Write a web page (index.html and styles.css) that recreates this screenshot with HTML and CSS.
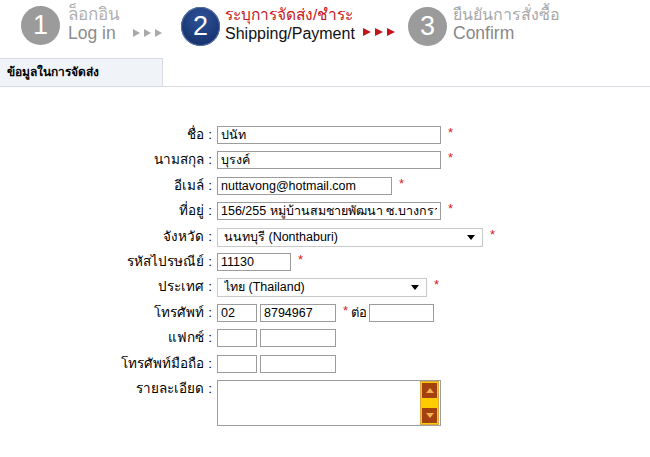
FILE: index.html
```html
<!DOCTYPE html>
<html lang="th">
<head>
<meta charset="utf-8">
<title>Shipping/Payment</title>
<link rel="stylesheet" href="styles.css">
</head>
<body>
<div class="steps">
  <div class="step step-done">
    <div class="circle">1</div>
    <div class="step-text s1"><div class="th">ล็อกอิน</div><div class="en">Log in</div></div>
    <svg class="arrows" width="29" height="8" viewBox="0 0 29 8"><polygon points="0,0 7,4 0,8" /><polygon points="11,0 18,4 11,8"/><polygon points="22,0 29,4 22,8"/></svg>
  </div>
  <div class="step step-cur">
    <div class="circle">2</div>
    <div class="step-text s2"><div class="th">ระบุการจัดส่ง/ชำระ</div><div class="en">Shipping/Payment</div></div>
    <svg class="arrows" width="33" height="8" viewBox="0 0 33 8"><polygon points="0,0 8,4 0,8"/><polygon points="12,0 20,4 12,8"/><polygon points="24,0 32,4 24,8"/></svg>
  </div>
  <div class="step step-next">
    <div class="circle">3</div>
    <div class="step-text s3"><div class="th">ยืนยันการสั่งซื้อ</div><div class="en">Confirm</div></div>
  </div>
</div>

<div class="tabbar">
  <div class="tab">ข้อมูลในการจัดส่ง</div>
</div>

<form class="form">
  <div class="row"><label class="lbl">ชื่อ :</label><div class="fields"><input class="in w224" value="ปนัท"><span class="req">*</span></div></div>
  <div class="row"><label class="lbl">นามสกุล :</label><div class="fields"><input class="in w224" value="บุรงค์"><span class="req">*</span></div></div>
  <div class="row"><label class="lbl">อีเมล์ :</label><div class="fields"><input class="in w175" value="nuttavong@hotmail.com"><span class="req">*</span></div></div>
  <div class="row"><label class="lbl">ที่อยู่ :</label><div class="fields"><input class="in w224" value="156/255 หมู่บ้านสมชายพัฒนา ซ.บางกรวยไทรน้อย"><span class="req">*</span></div></div>
  <div class="row"><label class="lbl">จังหวัด :</label><div class="fields"><div class="sel w266"><span class="sel-val">นนทบุรี (Nonthaburi)</span><span class="caret"></span></div><span class="req">*</span></div></div>
  <div class="row"><label class="lbl">รหัสไปรษณีย์ :</label><div class="fields"><input class="in w74" value="11130"><span class="req">*</span></div></div>
  <div class="row"><label class="lbl">ประเทศ :</label><div class="fields"><div class="sel w210"><span class="sel-val">ไทย (Thailand)</span><span class="caret"></span></div><span class="req">*</span></div></div>
  <div class="row"><label class="lbl">โทรศัพท์ :</label><div class="fields"><input class="in w40" value="02"><input class="in w76 ml3" value="8794967"><span class="req">*</span><span class="ext">ต่อ</span><input class="in w65"></div></div>
  <div class="row"><label class="lbl">แฟกซ์ :</label><div class="fields"><input class="in w40"><input class="in w76 ml3"></div></div>
  <div class="row"><label class="lbl">โทรศัพท์มือถือ :</label><div class="fields"><input class="in w40"><input class="in w76 ml3"></div></div>
  <div class="row row-tall"><label class="lbl">รายละเอียด :</label><div class="fields">
    <div class="ta">
      <div class="ta-body"></div>
      <div class="sb">
        <div class="sb-btn"><svg width="8" height="5" viewBox="0 0 8 5"><polygon points="4,0 8,5 0,5"/></svg></div>
        <div class="sb-btn"><svg width="8" height="5" viewBox="0 0 8 5"><polygon points="0,0 8,0 4,5"/></svg></div>
      </div>
    </div>
  </div></div>
</form>
</body>
</html>
```
FILE: styles.css
```css
* { box-sizing: border-box; }
body {
  margin: 0;
  background: #fff;
  font-family: "Liberation Sans", "DejaVu Sans", sans-serif;
  color: #000;
  width: 650px;
  height: 457px;
  overflow: hidden;
}

/* steps */
.steps {
  height: 58px;
  display: flex;
  align-items: flex-start;
  padding-left: 21px;
  padding-top: 6px;
}
.step { display: flex; align-items: flex-start; }
.circle {
  width: 39px;
  height: 39px;
  border-radius: 50%;
  background: #9b9b9b;
  color: #fff;
  font-size: 27px;
  line-height: 39px;
  text-align: center;
  flex: none;
}
.step-cur .circle {
  margin-top: 1px;
  background: radial-gradient(circle at 50% 30%, #2e5298 0%, #1c3a78 60%, #142c60 100%);
  box-shadow: 0 0 0 1px #5670a4 inset;
}
.step-text {
  margin-left: 8px;
  font-size: 17px;
  line-height: 19px;
  margin-top: -1px;
  white-space: nowrap;
}
.step-text .th { color: #b0b0b0; }
.step-text .en { color: #8c8c8c; font-size: 17.5px; }
.s1 { width: 65px; }
.s2 { width: 138px; margin-left: 5px; }
.s2 .th { font-size: 15.5px; }
.s2 .en { font-size: 16px; }
.s3 { margin-left: 6px; }
.s3 .th { font-size: 16px; }
.step-cur .th { color: #c8161d; }
.step-cur .en { color: #111; }
.step-next .th { color: #a8a8a8; }
.step-next .en { color: #888; }
.arrows { margin-top: 23px; flex: none; }
.step-done .arrows { fill: #a9a9a9; margin-right: 19px; }
.step-cur .arrows { fill: #c0161b; margin-top: 22px; margin-right: 12px; }
.step-next .circle { margin-top: 1px; }

/* tab */
.tabbar {
  border-bottom: 1px solid #d7dce2;
  height: 29px;
}
.tab {
  width: 163px;
  height: 28px;
  background: #f0f4f9;
  border-top: 1px solid #d7dce2;
  border-right: 1px solid #d7dce2;
  font-size: 12px;
  font-weight: bold;
  line-height: 27px;
  padding-left: 7px;
}

/* form */
.form {
  padding-top: 39px;
  font-size: 13.5px;
  font-family: "Liberation Sans", "DejaVu Sans", sans-serif;
}
.row {
  display: flex;
  align-items: flex-start;
  height: 18px;
  margin-bottom: 7.4px;
}
.row-tall { height: 46px; }
.lbl {
  width: 213px;
  padding-right: 1px;
  text-align: right;
  line-height: 18px;
  white-space: nowrap;
}
.fields {
  margin-left: 4px;
  display: flex;
  align-items: flex-start;
}
.in {
  height: 18px;
  border: 1px solid #9c9c9c;
  padding: 0 3px;
  font: 12.5px "Liberation Sans", "DejaVu Sans", sans-serif;
  color: #000;
  background: #fff;
  outline: none;
  margin: 0;
}
.w224 { width: 224px; }
.w175 { width: 175px; }
.w74 { width: 74px; }
.w40 { width: 40px; }
.w76 { width: 76px; }
.w65 { width: 65px; }
.w266 { width: 266px; }
.w210 { width: 210px; }
.ml3 { margin-left: 3px; }
.req {
  color: #d42020;
  margin-left: 7px;
  font-size: 13px;
  line-height: 14px;
}
.ext {
  margin-left: 3px;
  margin-right: 2px;
  line-height: 18px;
  font-size: 13px;
}
.sel {
  height: 19px;
  border: 1px solid #c9c9c9;
  display: flex;
  align-items: center;
  padding-left: 6px;
  padding-right: 7px;
  background: #fff;
  font-size: 12.5px;
}
.sel-val { flex: 1; line-height: 17px; white-space: nowrap; overflow: hidden; }
.caret {
  width: 0; height: 0;
  border-left: 4px solid transparent;
  border-right: 4px solid transparent;
  border-top: 5px solid #000;
  flex: none;
}
.ta {
  width: 224px;
  height: 46px;
  border: 1px solid #9c9c9c;
  display: flex;
  background: #fff;
}
.ta-body { flex: 1; }
.sb {
  width: 19px;
  margin: 0 1px 0 0;
  background: #ffcc00;
  border: 1px solid #e0a838;
  display: flex;
  flex-direction: column;
  justify-content: space-between;
  align-items: center;
  padding: 1px 0;
}
.sb-btn {
  width: 15px;
  height: 15px;
  background: #a3420e;
  display: flex;
  align-items: center;
  justify-content: center;
}
.sb-btn svg { fill: #f7b050; }
```
